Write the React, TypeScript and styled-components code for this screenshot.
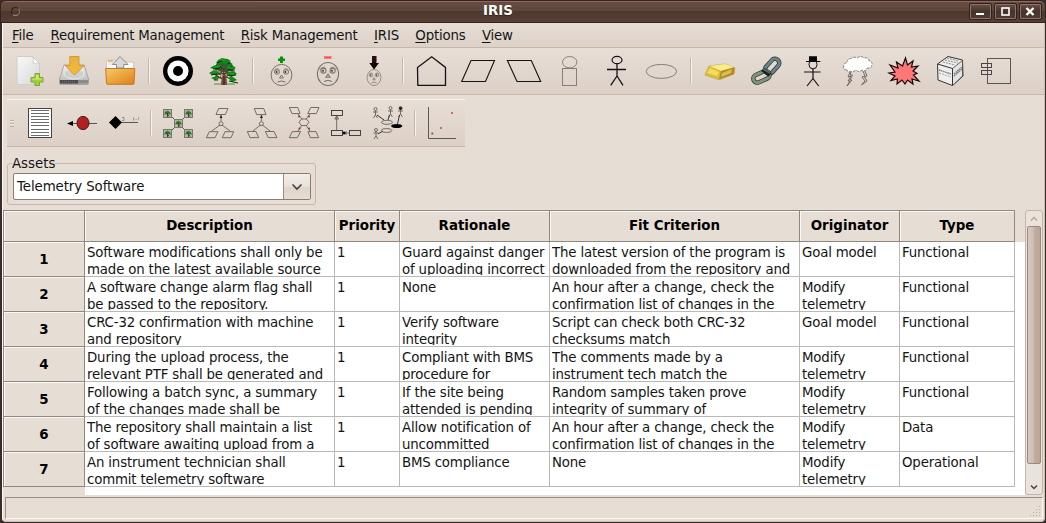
import React from "react";
import styled, { createGlobalStyle, css } from "styled-components";

const GlobalStyle = createGlobalStyle`
  * { box-sizing: border-box; }
  body { margin: 0; background: #3c2b2c; overflow: hidden; }
  #root { font: 13.33px/17px "DejaVu Sans", sans-serif; color: #141414; }
`;

const line = "#c9b8aa";
const face = "#e6ddd5";

const Window = styled.div`
  width: 1046px;
  height: 523px;
  display: flex;
  flex-direction: column;
  background: #3a2c29;
  border-radius: 6px 6px 4px 4px;
  overflow: hidden;
`;

const TitleBar = styled.header`
  height: 23px;
  flex: none;
  display: grid;
  grid-template-columns: 80px 1fr 80px;
  align-items: center;
  padding: 0 3px 0 10px;
  border: 1px solid #35231f;
  border-radius: 6px 6px 0 0;
  background: linear-gradient(#6b4c41, #5d463b 45%, #4a382f 50%, #573f36);
  box-shadow: inset 0 1px #8b6b60;
`;

const TitleDot = styled.span`
  width: 9px;
  height: 9px;
  border-radius: 50%;
  border: 1px solid #a08b82;
  border-color: #2f211c #8c766d #a08b82 #2f211c;
`;

const Title = styled.h1`
  margin: 0;
  padding: 0 57px 2px 0;
  text-align: center;
  font-size: 13.33px;
  line-height: 19px;
  color: #fff;
  text-shadow: 0 1px 1px #30201a;
`;

const TitleButtons = styled.div`
  display: flex;
  justify-content: flex-end;
  gap: 2px;
  margin-top: -1px;
`;

const TitleButton = styled.button`
  width: 23px;
  height: 17px;
  padding: 0;
  border: 1px solid #2f211c;
  border-radius: 2px;
  background: linear-gradient(#6b5044, #46342c 50%, #503b33);
  box-shadow: inset 0 0 0 1px #8a756b;
  svg { display: block; }
`;

const Body = styled.div`
  flex: 1;
  min-height: 0;
  display: flex;
  flex-direction: column;
  margin: 0 1px 1px 2px;
  border-left: 1px solid #fbf8f5;
  border-right: 1px solid #cdbfb4;
  border-bottom: 1px solid #cdbfb4;
  border-radius: 0 0 4px 4px;
  background: ${face};
`;

const MenuBar = styled.nav`
  height: 25px;
  flex: none;
  display: flex;
  padding: 4px 9px 0;
  gap: 16.4px;
  letter-spacing: -0.18px;
  background: linear-gradient(#e6ddd5, #ddd2c8);
  border-bottom: 1px solid ${line};
`;

const MenuItem = styled.span`
  white-space: nowrap;
  &:first-child { margin-right: 0.5px; }
`;

const Mnemonic = styled.span`
  text-decoration: underline;
  text-underline-offset: 2px;
  text-decoration-thickness: 1px;
`;

const Separator = styled.span`
  width: 2px;
  height: 26px;
  margin: 0 5px;
  border-left: 1px solid #c6b5a8;
  border-right: 1px solid #f6f1ec;
  &:first-of-type { margin-left: 4px; }
`;

const ToolBar = styled.div<{ $detached?: boolean }>`
  flex: none;
  display: flex;
  align-items: center;
  height: 47px;
  padding-left: 3px;
  background: linear-gradient(#e7ded6, #dcd0c6);
  border-bottom: 1px solid ${line};
  ${(p) =>
    p.$detached &&
    css`
      width: 458px;
      height: 48px;
      margin: 4px 0 0 4px;
      border-top: 1px solid #f8f4f0;
      border-bottom-color: #c5b6aa;
    `}
`;

const Grip = styled.span`
  width: 4px;
  height: 7px;
  margin-right: 5px;
  background: repeating-linear-gradient(#c0aea1 0 1px, #f0e9e3 1px 2px, transparent 2px 3px);
`;

const Tool = styled.button<{ $size: number }>`
  width: ${(p) => p.$size}px;
  height: 40px;
  padding: 0;
  border: 0;
  background: none;
  display: flex;
  align-items: center;
  justify-content: center;
  svg { overflow: visible; }
`;

const AssetGroup = styled.fieldset`
  flex: none;
  width: 309px;
  min-width: 0;
  height: 50px;
  margin: 8px 0 0 4px;
  padding: 0 5px;
  border: 1px solid ${line};
  border-radius: 3px;
`;

const AssetLegend = styled.legend`
  margin-left: -1px;
  padding: 0;
  height: 17px;
`;

const Combo = styled.div`
  display: flex;
  width: 298px;
  height: 27px;
  margin-top: 1px;
  border: 1px solid #8d7b70;
  border-radius: 2px;
  background: #fff;
`;

const ComboValue = styled.span`
  flex: 1;
  padding: 4px 3px;
  letter-spacing: -0.08px;
`;

const ComboArrow = styled.button`
  width: 27px;
  padding: 0;
  border: 0;
  border-left: 1px solid #9d8b80;
  background: linear-gradient(#f3eeea, #e9e1da 50%, #dfd4ca 50%, #e6dcd4);
  svg { display: block; margin: auto; }
`;

const GridArea = styled.div`
  flex: none;
  display: flex;
  height: 285px;
  margin-top: 5px;
`;

const GridCanvas = styled.div`
  width: 1022px;
  height: 285px;
  background: linear-gradient(${face}, ${face}) 0 0 / 82px 100% no-repeat,
    linear-gradient(${face}, ${face}) 0 0 / 100% 32px no-repeat, #fff;
`;

const Table = styled.div`
  width: 1012px;
  border-left: 1px solid #8f8881;
  border-top: 1px solid #8f8881;
`;

const Row = styled.div<{ $head?: boolean }>`
  display: grid;
  grid-template-columns: 81px 250px 65px 150px 250px 100px 115px;
  height: ${(p) => (p.$head ? 31 : 35)}px;
`;

const HeadCell = styled.div<{ $column?: boolean }>`
  display: flex;
  align-items: center;
  justify-content: center;
  padding-bottom: ${(p) => (p.$column ? 2 : 0)}px;
  font-size: 13.4px;
  font-weight: bold;
  color: #000;
  background: ${face};
  border-right: 1px solid #8f8881;
  border-bottom: 1px solid #8f8881;
  box-shadow: inset 1px 1px #fbf9f7;
  white-space: nowrap;
`;

const Cell = styled.div`
  padding: 2px 0 0 2px;
  border-right: 1px solid #b9b9b9;
  border-bottom: 1px solid #b9b9b9;
`;

const CellText = styled.div`
  height: 31px;
  overflow: hidden;
  white-space: pre;
  letter-spacing: -0.16px;
`;

const ScrollBar = styled.div`
  width: 18px;
  display: flex;
  flex-direction: column;
  align-items: center;
  border: 1px solid #c5b5a8;
  border-radius: 3px;
  background: #eae3dc;
`;

const ScrollArrow = styled.span`
  height: 15px;
  display: flex;
  align-items: center;
`;

const ScrollThumb = styled.span`
  width: 14px;
  height: 238px;
  border: 1px solid #9c897c;
  border-radius: 2px;
  background: linear-gradient(90deg, #d6c9be, #ccbcaf 50%, #c1aea0 50%, #baa697);
  margin-bottom: auto;
`;

const StatusBar = styled.footer`
  flex: none;
  display: flex;
  align-items: flex-end;
  justify-content: flex-end;
  height: 22px;
  margin: 2px 1px 0 2px;
  border: 1px solid #fcfaf8;
  border-top-color: #9b8f86;
  border-left-color: #9b8f86;
`;

const ink = { fill: "none", stroke: "#151313", strokeWidth: 1 };

const Icon = ({ children }: { children: React.ReactNode }) => (
  <svg width="32" height="32" viewBox="0 0 32 32" fill="none">{children}</svg>
);

const NewIcon = () => (
  <Icon>
    <defs>
      <linearGradient id="paper" x2="1" y2="1"><stop stopColor="#fafafa" /><stop offset="1" stopColor="#d6d6d6" /></linearGradient>
    </defs>
    <path d="M5 1.5H19.5L26.5 8.5V29.5H5Q4 29.5 4 28.5V2.5Q4 1.5 5 1.5Z" fill="url(#paper)" stroke="#cfcdca" />
    <path d="M19.5 1.5Q21.5 6 20 8.3Q24 7.5 26.5 8.5Z" fill="#fff" stroke="#c4c4c2" strokeWidth=".7" />
    <path d="M22 18.5H26.5V22.5H30V27H26.5V30.5H22V27H18V22.5H22Z" fill="#a3cf38" stroke="#7fa534" />
    <path d="M23 20H25.5V23.5H29V24.5H19.5V23.5H23Z" fill="#cdea7d" />
  </Icon>
);

const SaveIcon = () => (
  <Icon>
    <defs>
      <linearGradient id="drive" x2="0" y2="1"><stop stopColor="#f2f2f2" /><stop offset="1" stopColor="#b2b2b2" /></linearGradient>
      <linearGradient id="amber" x2="0" y2="1"><stop stopColor="#e9b145" /><stop offset="1" stopColor="#f5ba35" /></linearGradient>
    </defs>
    <path d="M5 10H25L29.5 24V28.5Q29.5 29.5 28.5 29.5H1.5Q.5 29.5 .5 28.5V24Z" fill="url(#drive)" stroke="#999" strokeWidth=".8" />
    <ellipse cx="15" cy="19" rx="10" ry="5" fill="#cfcfcf" stroke="#e9e9e9" />
    <path d="M1 25H29V28.6H1Z" fill="#8a8a8a" />
    <path d="M1 25H19V28.6H1Z" fill="#4b4b4b" />
    <path d="M3 26.7H17" stroke="#777" strokeDasharray="1 1" />
    <path d="M10.8 1.5H20V10.5H25.3L15.5 20L6 10.5H10.8Z" fill="url(#amber)" stroke="#d39b33" />
  </Icon>
);

const OpenIcon = () => (
  <Icon>
    <defs>
      <linearGradient id="folder" x2="1" y2="1"><stop stopColor="#f6c96b" /><stop offset=".5" stopColor="#eba53c" /><stop offset="1" stopColor="#dc7f1c" /></linearGradient>
    </defs>
    <path d="M1.5 29V6.5L3 5H10L12 7H28.5V29Z" fill="#fafafa" stroke="#c5bdb4" strokeWidth=".8" />
    <path d="M3 7H9M3 9H9" stroke="#ddd" />
    <path d="M3 6H8" stroke="#e9ab5c" strokeWidth="1.5" />
    <path d="M.7 13.5H29.8L29 28.5Q29 29.3 28 29.3H2.5Q1.6 29.3 1.5 28.5Z" fill="url(#folder)" stroke="#c57a22" />
    <path d="M15 1.5L23 9.5H18.7V13H11.5V9.5H7.3Z" fill="#d8d8d8" stroke="#8d8d8d" />
  </Icon>
);

const TargetIcon = () => (
  <Icon>
    <circle cx="16" cy="16" r="15" fill="#000" />
    <circle cx="16" cy="16" r="10.6" fill="#fff" />
    <circle cx="16" cy="16" r="5" fill="#000" />
  </Icon>
);

const TreeIcon = () => (
  <Icon>
    <path d="M13 4L20 4L24 9L26 14L24 17L25 21L22 24L19 23L18 17L14 17L13 22L9 23L7 20L8 16L6 13L9 8Z" fill="#3f5a30" />
    <path d="M15 30L16 13M16 20L22 13M15 19L9 14M16 23L24 20M15 24L8 21" stroke="#5e372c" strokeWidth="1.5" />
    <path d="M9 15L13 17L11 18L8 17ZM20 16L24 16L22 18ZM9 20L13 20L12 22ZM19 21L23 21L21 23Z" fill="#e0d6cd" />
    <path d="M12.5 30L14.5 20L18 20L19.5 30Z" fill="#7d5141" />
    <path d="M16 21V30" stroke="#2a1712" />
    <path d="M10 5L14 3L19 4L23 6L20 7L25 9L20 10L15 8L11 9L8 8ZM5 11L11 9L14 11L11 13L6 14L2 13ZM18 11L24 10L28 13L24 15L20 14ZM1 18L6 15L12 17L9 19L4 20ZM19 17L26 16L29 19L25 21L20 20ZM3 23L8 21L11 24L7 25ZM20 23L25 22L29 25L24 27Z" fill="#0b8a18" />
    <path d="M9 8L14 6M19 9L22 8M5 14L12 13M20 15L27 15M3 20L9 19M21 21L28 20M21 26L30 28M6 25L10 25M12 11L14 14M22 12L24 12" stroke="#142c12" />
    <path d="M12 4L17 6M7 12L12 11M20 12L25 13M5 17L9 17M22 18L26 19M8 23L10 23M6 29H12M20 29H27" stroke="#2f9c3b" />
  </Icon>
);

const Face = ({ cx, cy, rx, ry }: { cx: number; cy: number; rx: number; ry: number }) => (
  <g transform={`translate(${cx} ${cy}) scale(${rx / 11} ${ry / 11})`} stroke="#77706c" fill="none">
    <circle r="10.6" />
    <path d="M-8-4Q-5-8-2-5M2-5Q5-8 8-4" strokeWidth=".8" />
    <ellipse cx="-4.6" cy="-3" rx="2.6" ry="2.2" />
    <ellipse cx="4.6" cy="-3" rx="2.6" ry="2.2" />
    <path d="M-5-4V-2M4-4V-2" stroke="#333" strokeWidth="1.5" />
    <path d="M0 0L-2 3H2ZM-4 7Q0 5 4 7" />
  </g>
);

const PersonaAddIcon = () => (
  <Icon>
    <path d="M14 1.5H17V3.5H19V6H17V8H14V6H12V3.5H14Z" fill="#079407" />
    <Face cx={15.5} cy={20} rx={10.8} ry={11} />
  </Icon>
);

const PersonaRemoveIcon = () => (
  <Icon>
    <rect x="12" y="1.3" width="7.5" height="2.4" fill="#ff5555" />
    <Face cx={16} cy={19} rx={11} ry={12} />
  </Icon>
);

const PersonaImportIcon = () => (
  <Icon>
    <path d="M14 1H18.3V8H21L16 14.5L11.3 8H14Z" fill="#100506" />
    <path d="M14 1H18.3V7H14Z" fill="#2d0d10" />
    <Face cx={16} cy={22.5} rx={7.2} ry={8.3} />
  </Icon>
);

const HouseIcon = () => (
  <Icon><path d="M1.5 12.4L15.7 1.8L29.5 12.4V30.3H1.8Z" {...ink} strokeWidth="1.3" /></Icon>
);
const GoalIcon = () => (
  <Icon><path d="M9 5.5H32.5L23.5 26.5H-.3Z" {...ink} strokeWidth="1.1" /></Icon>
);
const ObstacleIcon = () => (
  <Icon><path d="M-.6 5.5H23.3L32.7 26.5H9Z" {...ink} strokeWidth="1.1" /></Icon>
);

const RoleIcon = () => (
  <Icon>
    <ellipse cx="15.7" cy="7.2" rx="7.2" ry="5.7" stroke="#8a817c" />
    <rect x="8.5" y="13.5" width="14" height="17" stroke="#8a7c7c" />
  </Icon>
);

const StickIcon = () => (
  <Icon>
    <ellipse cx="17" cy="5" rx="5" ry="3.7" {...ink} strokeWidth="1.2" />
    <path d="M17 9V21M7 14.5H26M17 21L10.7 30.3M17 21L23 30.3" {...ink} strokeWidth="1.3" />
  </Icon>
);

const EllipseIcon = () => (
  <Icon><ellipse cx="15.4" cy="16.4" rx="15.2" ry="7" stroke="#8a7c78" /></Icon>
);

const GoldIcon = () => (
  <Icon>
    <path d="M1 20L5 11L21 9L31 13L30 19L16 24.5L13 24Z" fill="#d9bb3e" stroke="#a98e32" strokeWidth=".6" />
    <path d="M5 11L21 9L30 12L17 16Z" fill="#f8ec8e" />
    <path d="M5 11L17 16L14 24L1 20Z" fill="#ddbd35" />
    <path d="M17 16L30 12.5L30 19L15 24.3Z" fill="#b18b20" />
    <path d="M3 18L6 13L15 17L13 21Z" fill="#f2dc60" />
    <path d="M18 18L28 14L27 18L17 22Z" fill="#d9bd55" />
  </Icon>
);

const ChainIcon = () => (
  <Icon>
    <g transform="rotate(-48 22 11)">
      <rect x="13.5" y="7" width="17" height="8.5" rx="4.2" stroke="#273535" strokeWidth="4.4" />
      <rect x="13.5" y="7" width="17" height="8.5" rx="4.2" stroke="#6d8384" strokeWidth="3" />
    </g>
    <g transform="rotate(-24 11 22)">
      <rect x="3" y="18" width="17" height="8" rx="4" stroke="#2f3c32" strokeWidth="4.4" />
      <rect x="3" y="18" width="17" height="8" rx="4" stroke="#81947a" strokeWidth="3" />
    </g>
    <path d="M12.5 14.5L20 20" stroke="#182222" strokeWidth="4.4" />
    <path d="M13 14L20 18" stroke="#566c68" strokeWidth="1.8" />
  </Icon>
);

const HatManIcon = () => (
  <Icon>
    <path d="M13 1.2H21V6H24.3V7H10V6H13Z" fill="#050505" />
    <circle cx="17" cy="9.8" r="4" {...ink} />
    <path d="M17 14V23.5M8 17H24.5M17 23.5L11 31M17 23.5L22.7 31" {...ink} strokeWidth="1.2" />
  </Icon>
);

const StormIcon = () => (
  <Icon>
    <path d="M5 15Q1 15 1.5 11Q2 8 5 7.5Q5 4 9 3.5Q12 1 15 3Q19 0 22 3Q27 2 27 6Q31 7 30 10Q29 14 25 13Q24 17 20 15Q17 18 14 15Q11 18 8 16Q6 18 5 15Z" fill="#fff" stroke="#6d6d6d" strokeWidth=".8" strokeDasharray="3 1" />
    <path d="M8 17L6 22L9 21L6 26L8 26L5 31M9 17L8 20L10.5 20L8 25L10 25L5 31M21 16L23 21L20 22L23 26L19.5 30M23 16L25 21L22.5 22L25 26L19.5 30" stroke="#5c5350" strokeWidth=".8" />
  </Icon>
);

const BurstIcon = () => (
  <Icon>
    <path d="M17.5 3L19.5 10L25 6L23.5 12L30 11L25 16L29 18.5L25.5 20L31 26L24 24L25 29L19.5 25L17 29L14 25L9 29L9.5 24L3 25.5L7 21L1 18L7 17L2 10L10 13L8.5 7L14.5 11Z" fill="#ff7777" stroke="#140909" strokeWidth="1.2" strokeLinejoin="miter" />
  </Icon>
);

const BoxIcon = () => (
  <Icon>
    <path d="M3.5 9L14 1.5L28.5 5L29 21L18.5 30.5L4 25Z" fill="#eee" stroke="#333" />
    <path d="M18.5 13.5L28.5 5.5V21L18.5 30.5Z" fill="#e3e3e3" stroke="#444" strokeWidth=".8" />
    <path d="M3.5 9L18.5 13.5V30" stroke="#333" />
    <path d="M11 5L24 8M9 7L21 10M13 3L25 6" stroke="#888" strokeDasharray="2 1" />
    <path d="M5 15L17 19M20 19L28 12M20 21L28 14" stroke="#777" strokeWidth="1.4" strokeDasharray="1.5 .7" />
    <path d="M5 18L17 22" stroke="#aaa" strokeDasharray="2 1" />
  </Icon>
);

const ComponentIcon = () => (
  <Icon>
    <rect x="7.5" y="3.5" width="23" height="25" stroke="#5c5652" />
    <rect x="1.5" y="8.5" width="10" height="4" stroke="#4b4643" />
    <rect x="1.5" y="15.5" width="10" height="4" stroke="#4b4643" />
  </Icon>
);

const DocumentIcon = () => (
  <Icon>
    <rect x="4.5" y="1.5" width="23" height="29" fill="#fff" stroke="#444" />
    <path d="M7 3.5H25M7 6.5H25M7 9.5H25M7 12.5H25M7 15.5H25M7 18.5H25M7 22.5H25M7 25.5H25M7 28.5H25" stroke="#6b6b6b" />
  </Icon>
);

const DependencyIcon = () => (
  <Icon>
    <path d="M2 16.5H31" stroke="#5b5552" />
    <path d="M1 16.5L7 14V19Z" fill="#000" />
    <ellipse cx="17" cy="16" rx="6" ry="6.6" fill="#b42020" stroke="#431c1c" />
  </Icon>
);

const AssociationIcon = () => (
  <Icon>
    <path d="M12 15.5H30" stroke="#5b5552" />
    <path d="M1 15.5L7.5 9L14 15.5L7.5 22Z" fill="#000" />
    <path d="M14 10.5H16V13.5H14M25.5 10.5V13.5M27.5 12.5H28.5M30.5 10.5V12.5" stroke="#958b85" />
  </Icon>
);

const TreeTile = ({ x, y }: { x: number; y: number }) => (
  <g transform={`translate(${x} ${y})`}>
    <rect x=".5" y=".5" width="8" height="8" fill="#b5b7a5" stroke="#77776b" />
    <path d="M1.5 4L4 1.5L7 3L8 6L6 5L4.5 6L3 5L1.5 6Z" fill="#2f7a2c" />
    <path d="M3 3L6 7.5M4.5 4V8" stroke="#4a4128" />
    <path d="M2 3L5 2" stroke="#3ca03c" />
  </g>
);

const ObstacleTreeIcon = () => (
  <Icon>
    <path d="M8 8L25 25M25 8L8 25" stroke="#555" />
    <TreeTile x={1} y={2} /><TreeTile x={22} y={2} /><TreeTile x={12} y={12} />
    <TreeTile x={1} y={22} /><TreeTile x={22} y={22} />
  </Icon>
);

const thin = { fill: "none", stroke: "#67605b", strokeWidth: 0.9 };

const GoalTreeIcon = () => (
  <Icon>
    <path d="M14.7 1.5H24L21.3 7.5H12ZM5.3 24.7H14L11 30.7H2.3ZM21 24.7H29.7L27 30.7H18.3Z" {...thin} />
    <path d="M17 8V14M16 18L7.7 24M18 18L26 24" {...thin} />
    <path d="M17 8L18.5 11H15.5Z" fill="#222" />
    <circle cx="17" cy="16.7" r="2" {...thin} />
  </Icon>
);

const ObstacleGoalIcon = () => (
  <Icon>
    <path d="M8.3 1.5H17.7L20 7.6H10.7ZM1.3 24.5H10L12.7 30.6H4ZM19.3 24.5H28L31 30.6H22.3Z" {...thin} />
    <path d="M15.4 8V14M14.4 18L7 24M16.4 18L24 24" {...thin} />
    <path d="M15.4 8L17 11H14Z" fill="#222" />
    <circle cx="15.4" cy="16.7" r="2" {...thin} />
  </Icon>
);

const ResponsibilityIcon = () => (
  <Icon>
    <path d="M1.3 .5H9.7L12 6.6H4ZM22.7 .5H31L28.3 6.6H19.7ZM4.3 24.6H12.7L9.3 30.7H1.3ZM20 24.6H28L30.7 30.7H22.3Z" {...thin} />
    <path d="M10 7L14 12M22 7L18 12M10 24L14 18M22 24L18 18" {...thin} />
    <path d="M13.5 12H18.5L21 15.3L18.5 18.5H13.5L11 15.3Z" {...thin} />
    <g fill="#992b2b"><circle cx="11" cy="9.5" r="1" /><circle cx="21" cy="9.5" r="1" /><circle cx="11.5" cy="21.5" r="1" /><circle cx="21" cy="21.5" r="1" /></g>
  </Icon>
);

const ClassIcon = () => (
  <Icon>
    <rect x="1.5" y="3.5" width="11" height="5" {...thin} stroke="#333" />
    <rect x="1.5" y="23.5" width="11" height="5" {...thin} stroke="#333" />
    <rect x="19.5" y="23.5" width="11" height="5" {...thin} stroke="#333" />
    <path d="M6.7 9V23M12 26H19M16 24V28" {...thin} />
    <path d="M6.7 9L8.7 12H4.7Z" {...thin} />
    <path d="M12 26L14 24.3L16 26L14 27.7Z" fill="#000" />
  </Icon>
);

const Mini = ({ x, y }: { x: number; y: number }) => (
  <g transform={`translate(${x} ${y})`} {...thin}>
    <circle cy="-2" r="1.5" /><path d="M0 -.5V4M-2.5 1H2.5M0 4L-2 7M0 4L2 7" />
  </g>
);

const TaskIcon = () => (
  <Icon>
    <Mini x={3.5} y={4} /><Mini x={18.5} y={3} /><Mini x={28.5} y={3} /><Mini x={4} y={25} />
    <circle cx="28.6" cy="1.3" r="1.6" fill="#222" />
    <path d="M5 8L12 13M17.5 8L16 13M27.5 8L25.5 17M6 27L11 24" {...thin} stroke="#222" />
    <ellipse cx="15" cy="15.3" rx="5.5" ry="2" {...thin} />
    <ellipse cx="14.5" cy="23.5" rx="5.3" ry="2" {...thin} />
    <ellipse cx="24.7" cy="19" rx="5.6" ry="2.1" fill="#000" />
  </Icon>
);

const ChartIcon = () => (
  <Icon>
    <path d="M2.5 0V31.5H30" stroke="#5f5955" />
    <g fill="#b4322f"><rect x="25.2" y="5.2" width="1.6" height="1.6" /><rect x="14.2" y="20.2" width="1.6" height="1.6" /><rect x="5.4" y="25.6" width="1.8" height="1.8" /></g>
  </Icon>
);

type ToolGroup = [string, React.ComponentType][];

const mainTools: ToolGroup[] = [
  [["New", NewIcon], ["Save", SaveIcon], ["Open", OpenIcon]],
  [["Environments", TargetIcon], ["Vulnerabilities", TreeIcon]],
  [["Add persona", PersonaAddIcon], ["Remove persona", PersonaRemoveIcon], ["Import persona", PersonaImportIcon]],
  [["Domain", HouseIcon], ["Goals", GoalIcon], ["Obstacles", ObstacleIcon], ["Roles", RoleIcon], ["Personas", StickIcon], ["Tasks", EllipseIcon]],
  [["Assets", GoldIcon], ["Links", ChainIcon], ["Attackers", HatManIcon], ["Threats", StormIcon], ["Risks", BurstIcon], ["Responses", BoxIcon], ["Components", ComponentIcon]],
];

const modelTools: ToolGroup[] = [
  [["Document", DocumentIcon], ["Dependency", DependencyIcon], ["Association", AssociationIcon]],
  [["Risk model", ObstacleTreeIcon], ["Goal model", GoalTreeIcon], ["Obstacle model", ObstacleGoalIcon], ["Responsibility model", ResponsibilityIcon], ["Class model", ClassIcon], ["Task model", TaskIcon]],
  [["Chart", ChartIcon]],
];

const Tools = ({ groups, size }: { groups: ToolGroup[]; size: number }) => (
  <>
    {groups.map((group, i) => (
      <React.Fragment key={i}>
        {i > 0 && <Separator />}
        {group.map(([name, Glyph]) => (
          <Tool key={name} $size={size} aria-label={name}><Glyph /></Tool>
        ))}
      </React.Fragment>
    ))}
  </>
);

const menus = ["File", "Requirement Management", "Risk Management", "IRIS", "Options", "View"];
const headings = ["", "Description", "Priority", "Rationale", "Fit Criterion", "Originator", "Type"];
const rows = [
  ["Software modifications shall only be\nmade on the latest available source", "1", "Guard against danger\nof uploading incorrect", "The latest version of the program is\ndownloaded from the repository and", "Goal model", "Functional"],
  ["A software change alarm flag shall\nbe passed to the repository.", "1", "None", "An hour after a change, check the\nconfirmation list of changes in the", "Modify\ntelemetry", "Functional"],
  ["CRC-32 confirmation with machine\nand repository", "1", "Verify software\nintegrity", "Script can check both CRC-32\nchecksums match", "Goal model", "Functional"],
  ["During the upload process, the\nrelevant PTF shall be generated and", "1", "Compliant with BMS\nprocedure for", "The comments made by a\ninstrument tech match the", "Modify\ntelemetry", "Functional"],
  ["Following a batch sync, a summary\nof the changes made shall be", "1", "If the site being\nattended is pending", "Random samples taken prove\nintegrity of summary of", "Modify\ntelemetry", "Functional"],
  ["The repository shall maintain a list\nof software awaiting upload from a", "1", "Allow notification of\nuncommitted", "An hour after a change, check the\nconfirmation list of changes in the", "Modify\ntelemetry", "Data"],
  ["An instrument technician shall\ncommit telemetry software", "1", "BMS compliance", "None", "Modify\ntelemetry", "Operational"],
];

export default function App() {
  return (
    <>
      <GlobalStyle />
      <Window>
        <TitleBar>
          <TitleDot />
          <Title>IRIS</Title>
          <TitleButtons>
            <TitleButton aria-label="Minimize">
              <svg width="21" height="15"><path d="M6 9H14V11H6Z" fill="#fff" /></svg>
            </TitleButton>
            <TitleButton aria-label="Maximize">
              <svg width="21" height="15"><rect x="7" y="4" width="7" height="7" fill="none" stroke="#fff" strokeWidth="1.6" /></svg>
            </TitleButton>
            <TitleButton aria-label="Close">
              <svg width="21" height="15"><path d="M6.5 4L13.5 11M13.5 4L6.5 11" stroke="#fff" strokeWidth="2.4" /></svg>
            </TitleButton>
          </TitleButtons>
        </TitleBar>
        <Body>
          <MenuBar>
            {menus.map((m) => (
              <MenuItem key={m}><Mnemonic>{m[0]}</Mnemonic>{m.slice(1)}</MenuItem>
            ))}
          </MenuBar>
          <ToolBar><Tools groups={mainTools} size={46} /></ToolBar>
          <ToolBar $detached><Grip /><Tools groups={modelTools} size={42} /></ToolBar>
          <AssetGroup>
            <AssetLegend>Assets</AssetLegend>
            <Combo>
              <ComboValue>Telemetry Software</ComboValue>
              <ComboArrow aria-label="Show assets">
                <svg width="12" height="8"><path d="M1.5 1.5L6 6L10.5 1.5" fill="none" stroke="#4a4340" strokeWidth="1.7" /></svg>
              </ComboArrow>
            </Combo>
          </AssetGroup>
          <GridArea>
            <GridCanvas>
              <Table>
                <Row $head>{headings.map((h) => <HeadCell key={h} $column>{h}</HeadCell>)}</Row>
                {rows.map((cells, i) => (
                  <Row key={i}>
                    <HeadCell>{i + 1}</HeadCell>
                    {cells.map((c, j) => <Cell key={j}><CellText>{c}</CellText></Cell>)}
                  </Row>
                ))}
              </Table>
            </GridCanvas>
            <ScrollBar>
              <ScrollArrow><svg width="8" height="6"><path d="M1 4.5L4 1.5L7 4.5" fill="none" stroke="#b5a396" strokeWidth="1.3" /></svg></ScrollArrow>
              <ScrollThumb />
              <ScrollArrow><svg width="8" height="6"><path d="M1 1.5L4 4.5L7 1.5" fill="none" stroke="#4a4340" strokeWidth="1.5" /></svg></ScrollArrow>
            </ScrollBar>
          </GridArea>
          <StatusBar>
            <svg width="13" height="12" fill="#bfb0a4">
              {[0, 1, 2, 3].map((r) =>
                Array.from({ length: r + 1 }, (_, c) => (
                  <rect key={`${r}-${c}`} x={10 - c * 3} y={r * 3} width="1" height="1" />
                ))
              )}
            </svg>
          </StatusBar>
        </Body>
      </Window>
    </>
  );
}
